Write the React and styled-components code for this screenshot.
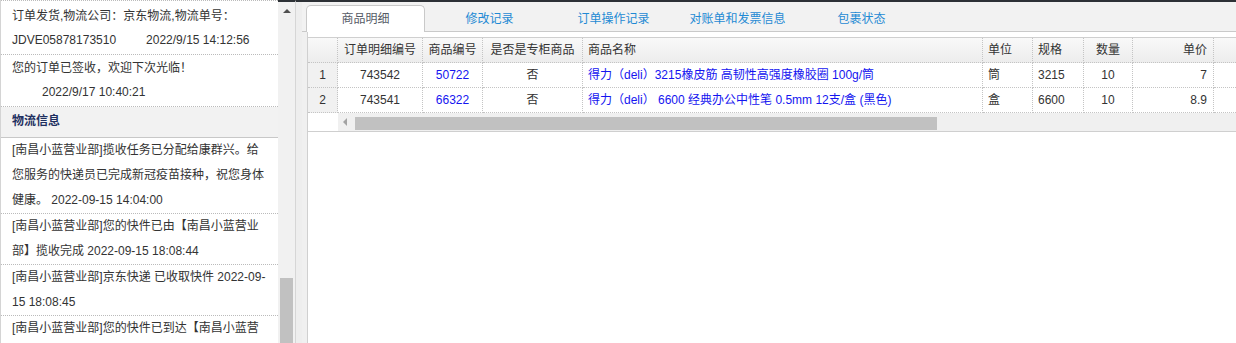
import React from 'react';
import styled, { createGlobalStyle, css } from 'styled-components';

const GlobalStyle = createGlobalStyle`
  html, body { margin: 0; padding: 0; background: #fff; }
  body {
    font-family: "Liberation Sans", Arial, "Noto Sans CJK SC", sans-serif;
    font-size: 12px;
    color: #333;
  }
`;

const DARK = '#2d3136';
const COLS = '30px 85px 60px 100px 400px 50px 51px 49px 81px 100px';

const Page = styled.div`
  display: flex;
  width: 1236px;
  height: 343px;
  overflow: hidden;
  background: #fff;
`;

const LeftPanel = styled.aside`
  width: 278px;
  flex: none;
  box-sizing: border-box;
  border-left: 1px solid #d4d4d4;
  overflow: hidden;
  background: #fff;
`;

const OrderList = styled.div`
  border-top: 1px dotted #bbb;
  padding-top: 2px;
`;

const OrderItem = styled.div`
  padding: 1px 10px 2px 11px;
  line-height: 24px;
  border-bottom: 1px dotted #bbb;
`;

const Time = styled.span`
  display: inline-block;
  margin-left: 30px;
`;

const SectionTitle = styled.div`
  height: 30px;
  line-height: 29px;
  padding-left: 11px;
  background: #f2f2f2;
  border-bottom: 1px solid #c8c8c8;
  font-weight: bold;
  color: #1e2f60;
`;

const LogItem = styled.div`
  padding: 0 10px 0 11px;
  line-height: 25px;
  border-bottom: 1px dotted #bbb;
  word-break: break-all;
`;

const VScroll = styled.div`
  width: 17px;
  flex: none;
  box-sizing: border-box;
  background: #f1f1f1;
  border-top: 2px solid ${DARK};
  display: flex;
  flex-direction: column;
  justify-content: space-between;
`;

const UpArrow = styled.div`
  width: 0;
  height: 0;
  margin: 7px auto 0;
  border-left: 4px solid transparent;
  border-right: 4px solid transparent;
  border-bottom: 4px solid #505050;
`;

const VThumb = styled.div`
  height: 65px;
  margin: 0 2px;
  background: #c1c1c1;
`;

const Splitter = styled.div`
  width: 7px;
  flex: none;
  box-sizing: border-box;
  background: #eeeeee;
  border-left: 1px solid #d6d6d6;
  border-top: 2px solid ${DARK};
`;

const Right = styled.main`
  flex: 1;
  min-width: 0;
  display: flex;
  flex-direction: column;
  border-top: 2px solid ${DARK};
`;

const TabBar = styled.div`
  display: flex;
  align-items: flex-end;
  height: 29px;
  padding-left: 4px;
  background: #f2f2f2;
  border-bottom: 1px solid #c9c9c9;
`;

const Tab = styled.div`
  width: 119px;
  height: 27px;
  margin-right: 5px;
  margin-bottom: -1px;
  box-sizing: border-box;
  border: 1px solid transparent;
  border-bottom: none;
  border-radius: 5px 5px 0 0;
  text-align: center;
  line-height: 26px;
  color: #1f8ad4;
  cursor: pointer;
  ${(p) =>
    p.$active &&
    css`
      background: #fff;
      border-color: #c9c9c9;
      color: #555b66;
    `}
`;

const Body = styled.div`
  flex: 1;
  display: flex;
  background: #f0f0f0;
  padding-left: 5px;
`;

const Panel = styled.div`
  flex: 1;
  min-width: 0;
  overflow: hidden;
  background: #fff;
  border-left: 1px solid #d0d0d0;
  padding-top: 5px;
`;

const Grid = styled.div`
  border-top: 1px solid #cfcfcf;
  border-bottom: 1px solid #cfcfcf;
  width: max-content;
  min-width: 100%;
`;

const Row = styled.div`
  display: grid;
  grid-template-columns: ${COLS};
  ${(p) =>
    p.$head &&
    css`
      background: linear-gradient(#f9f9f9, #ececec);
    `}
`;

const Cell = styled.div`
  box-sizing: border-box;
  height: 25px;
  line-height: 24px;
  padding: 0 5px;
  border-right: 1px dotted #c4c4c4;
  border-bottom: 1px dotted #c4c4c4;
  white-space: nowrap;
  overflow: hidden;
  text-align: ${(p) => p.$align || 'left'};
  color: ${(p) => (p.$link ? '#1414f0' : '#333')};
  ${(p) => p.$align === 'right' && css`padding-right: 6px;`}
`;

const NumCell = styled(Cell)`
  background: #f1f1f1;
  text-align: center;
  padding: 0;
`;

const HScrollRow = styled.div`
  display: flex;
  height: 18px;
`;

const HScrollGap = styled.div`
  width: 30px;
  flex: none;
  background: #fff;
`;

const HTrack = styled.div`
  flex: 1;
  display: flex;
  align-items: center;
  background: #f0f0f0;
`;

const LeftArrow = styled.div`
  width: 0;
  height: 0;
  margin-left: 5px;
  border-top: 4px solid transparent;
  border-bottom: 4px solid transparent;
  border-right: 4px solid #a3a3a3;
`;

const HThumb = styled.div`
  width: 582px;
  height: 13px;
  margin-left: 8px;
  margin-top: 2px;
  background: #c1c1c1;
`;

const tabs = ['商品明细', '修改记录', '订单操作记录', '对账单和发票信息', '包裹状态'];

const columns = [
  { title: '', align: 'center' },
  { title: '订单明细编号', align: 'center' },
  { title: '商品编号', align: 'center' },
  { title: '是否是专柜商品', align: 'center' },
  { title: '商品名称', align: 'left' },
  { title: '单位', align: 'left' },
  { title: '规格', align: 'left' },
  { title: '数量', align: 'center' },
  { title: '单价', align: 'right' },
  { title: '', align: 'left' },
];

const rows = [
  ['743542', '50722', '否', '得力（deli）3215橡皮筋 高韧性高强度橡胶圈 100g/筒', '筒', '3215', '10', '7', ''],
  ['743541', '66322', '否', '得力（deli） 6600 经典办公中性笔 0.5mm 12支/盒 (黑色)', '盒', '6600', '10', '8.9', ''],
];

const linkCols = [1, 3];

const logs = [
  '[南昌小蓝营业部]揽收任务已分配给康群兴。给您服务的快递员已完成新冠疫苗接种，祝您身体健康。 2022-09-15 14:04:00',
  '[南昌小蓝营业部]您的快件已由【南昌小蓝营业部】揽收完成 2022-09-15 18:08:44',
  '[南昌小蓝营业部]京东快递 已收取快件 2022-09-15 18:08:45',
  '[南昌小蓝营业部]您的快件已到达【南昌小蓝营业部】',
];

export default function App() {
  return (
    <>
      <GlobalStyle />
      <Page>
        <LeftPanel>
          <OrderList>
            <OrderItem>
              订单发货,物流公司：京东物流,物流单号：JDVE05878173510
              <Time>2022/9/15 14:12:56</Time>
            </OrderItem>
            <OrderItem>
              您的订单已签收，欢迎下次光临！
              <Time>2022/9/17 10:40:21</Time>
            </OrderItem>
          </OrderList>
          <SectionTitle>物流信息</SectionTitle>
          {logs.map((l, i) => (
            <LogItem key={i}>{l}</LogItem>
          ))}
        </LeftPanel>
        <VScroll>
          <UpArrow />
          <VThumb />
        </VScroll>
        <Splitter />
        <Right>
          <TabBar>
            {tabs.map((t, i) => (
              <Tab key={t} $active={i === 0}>
                {t}
              </Tab>
            ))}
          </TabBar>
          <Body>
            <Panel>
              <Grid>
                <Row $head>
                  {columns.map((c, i) => (
                    <Cell key={i} $align={c.align}>
                      {c.title}
                    </Cell>
                  ))}
                </Row>
                {rows.map((r, ri) => (
                  <Row key={ri}>
                    <NumCell>{ri + 1}</NumCell>
                    {r.map((v, ci) => (
                      <Cell key={ci} $align={columns[ci + 1].align} $link={linkCols.includes(ci)}>
                        {v}
                      </Cell>
                    ))}
                  </Row>
                ))}
                <HScrollRow>
                  <HScrollGap />
                  <HTrack>
                    <LeftArrow />
                    <HThumb />
                  </HTrack>
                </HScrollRow>
              </Grid>
            </Panel>
          </Body>
        </Right>
      </Page>
    </>
  );
}
